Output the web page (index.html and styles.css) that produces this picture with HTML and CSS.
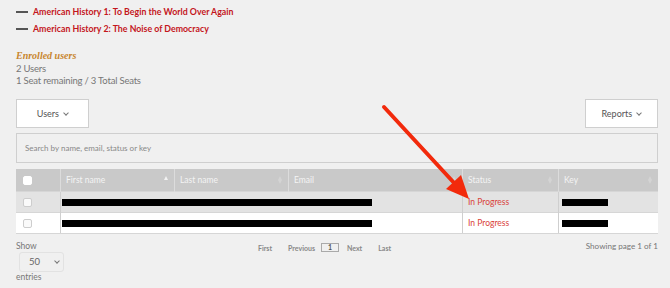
FILE: index.html
```html
<!DOCTYPE html>
<html lang="en">
<head>
  <meta charset="UTF-8">
  <title>Enrolled users</title>
  <link rel="stylesheet" href="styles.css">
</head>
<body>
  <div class="page">
    <!-- Courses in this bundle -->
    <ul class="courses">
      <li><span class="dash"></span><a href="#">American History 1: To Begin the World Over Again</a></li>
      <li><span class="dash"></span><a href="#">American History 2: The Noise of Democracy</a></li>
    </ul>

    <div class="summary">
      <h3>Enrolled users</h3>
      <p>2 Users</p>
      <p>1 Seat remaining / 3 Total Seats</p>
    </div>

    <div class="toolbar">
      <button class="drop">Users <span class="caret"></span></button>
      <button class="drop">Reports <span class="caret"></span></button>
    </div>

    <input class="search" type="text" placeholder="Search by name, email, status or key">

    <table class="users">
      <thead>
        <tr>
          <th class="col-check"><span class="box head-box"></span></th>
          <th class="col-first">First name <span class="sort up"></span></th>
          <th class="col-last">Last name <span class="sort"></span></th>
          <th class="col-email">Email <span class="sort"></span></th>
          <th class="col-status">Status <span class="sort"></span></th>
          <th class="col-key">Key <span class="sort"></span></th>
        </tr>
      </thead>
      <tbody>
        <tr class="odd">
          <td><span class="box"></span></td>
          <td class="redact-cell" colspan="3"><span class="redact"></span></td>
          <td class="status">In Progress</td>
          <td><span class="redact key"></span></td>
        </tr>
        <tr>
          <td><span class="box"></span></td>
          <td class="redact-cell" colspan="3"><span class="redact"></span></td>
          <td class="status">In Progress</td>
          <td><span class="redact key"></span></td>
        </tr>
      </tbody>
    </table>

    <div class="footer">
      <div class="length">
        <span>Show</span>
        <div class="select">50 <span class="caret"></span></div>
        <span>entries</span>
      </div>
      <div class="pager">
        <a href="#">First</a>
        <a href="#">Previous</a>
        <span class="current">1</span>
        <a href="#">Next</a>
        <a href="#">Last</a>
      </div>
      <div class="info">Showing page 1 of 1</div>
    </div>
  </div>

  <!-- annotation arrow drawn over the page -->
  <svg class="arrow" width="670" height="288" viewBox="0 0 670 288">
    <line x1="384" y1="107" x2="456" y2="185" stroke="#f22a0c" stroke-width="4" stroke-linecap="round"/>
    <polygon points="469,199 446,189 461,175" fill="#f22a0c"/>
  </svg>
</body>
</html>
```

FILE: styles.css
```css
body {
  margin: 0;
  background-color: #f0f0f0;
  font-family: Lato, "Open Sans", Arial, sans-serif;
  color: #666;
  position: relative;
}
.page {
  padding: 3px 12px 0 16px;
}
.courses {
  list-style: none;
  margin: 0;
  padding: 0;
}
.courses li {
  display: flex;
  align-items: center;
  height: 17px;
}
.dash {
  display: inline-block;
  width: 12px;
  height: 2px;
  background: #555;
  margin-right: 5px;
}
.courses a {
  color: #c4161c;
  font-weight: bold;
  font-size: 8.8px;
  text-decoration: none;
}
.summary {
  margin-top: 12px;
}
.summary h3 {
  margin: 0;
  font-family: "Liberation Serif", serif;
  font-style: italic;
  font-weight: bold;
  font-size: 10px;
  color: #c8862e;
  line-height: 14px;
}
.summary p {
  margin: 0;
  font-size: 9.5px;
  letter-spacing: -0.2px;
  line-height: 12px;
  color: #777;
}
.toolbar {
  display: flex;
  justify-content: space-between;
  margin-top: 12px;
}
.drop {
  width: 73px;
  height: 29px;
  background: #fff;
  border: 1px solid #cfcfcf;
  font-family: inherit;
  font-size: 9px;
  color: #555;
  padding: 0;
}
.caret {
  display: inline-block;
  width: 3px;
  height: 3px;
  border-right: 1px solid #777;
  border-bottom: 1px solid #777;
  transform: rotate(45deg);
  margin: 0 0 2px 3px;
}
.search {
  display: block;
  box-sizing: border-box;
  width: 100%;
  height: 30px;
  margin-top: 5px;
  border: 1px solid #cfcfcf;
  background: #f0f0f0;
  padding: 0 8px;
  font-family: inherit;
  font-size: 8px;
}
.search::placeholder {
  color: #888;
}
.users {
  width: 100%;
  table-layout: fixed;
  border-collapse: collapse;
  margin-top: 6px;
  font-size: 8.5px;
}
.users th {
  background: #c9c9c9;
  color: #f4f4f4;
  font-weight: normal;
  text-align: left;
  height: 22px;
  padding: 0 5px;
  border-left: 1px solid #dcdcdc;
  position: relative;
}
.users th:first-child {
  border-left: none;
}
.users td {
  height: 20px;
  padding: 0 5px;
  border-left: 1px solid #cfcfcf;
  border-top: 1px solid #d6d6d6;
  background: #fff;
  white-space: nowrap;
}
.users td:first-child {
  border-left: none;
}
.users tr.odd td {
  background: #e3e3e3;
}
.users tbody tr:last-child td {
  border-bottom: 1px solid #d6d6d6;
}
.col-check { width: 34px; }
.col-first { width: 103px; }
.col-last { width: 103px; }
.col-email { width: 163px; }
.col-status { width: 85px; }
.box {
  display: block;
  width: 7px;
  height: 7px;
  margin-left: 2px;
  border: 1px solid #cdcdcd;
  border-radius: 2px;
  background: #fafafa;
}
.head-box {
  background: #fff;
  border-color: #fff;
}
.sort {
  position: absolute;
  right: 6px;
  top: 7px;
  width: 0;
  height: 0;
  border-left: 2.5px solid transparent;
  border-right: 2.5px solid transparent;
  border-bottom: 4px solid #d4d4d4;
}
.sort::after {
  content: "";
  position: absolute;
  left: -2.5px;
  top: 4px;
  border-left: 2.5px solid transparent;
  border-right: 2.5px solid transparent;
  border-top: 4px solid #d4d4d4;
}
.sort.up {
  border-bottom-color: #f2f2f2;
}
.sort.up::after {
  border-top-color: transparent;
}
.redact-cell {
  padding-left: 1px !important;
}
.redact {
  display: block;
  width: 310px;
  height: 7px;
  background: #000;
}
.redact.key {
  width: 46px;
  margin-left: -2px;
}
.status {
  color: #d9423a;
}
.footer {
  display: flex;
  align-items: flex-start;
  margin-top: 7px;
  font-size: 8.5px;
}
.length {
  width: 230px;
  display: flex;
  flex-direction: column;
  align-items: flex-start;
  color: #777;
  line-height: 10px;
}
.select {
  box-sizing: border-box;
  width: 45px;
  height: 20px;
  margin: 1px 0 0 3px;
  border: 1px solid #e2e2e2;
  border-radius: 3px;
  display: flex;
  align-items: center;
  justify-content: space-between;
  padding: 0 4px 0 9px;
  font-size: 9.5px;
  color: #666;
}
.pager {
  display: flex;
  align-items: center;
  margin-left: 12px;
  margin-top: 2px;
  font-size: 7px;
  font-weight: bold;
}
.pager a {
  color: #888;
  text-decoration: none;
  margin-right: 16px;
}
.current {
  box-sizing: border-box;
  width: 18px;
  height: 9px;
  border: 1px solid #aaa;
  text-align: center;
  line-height: 7px;
  color: #555;
  margin: 0 8px 0 -10px;
}
.info {
  margin-left: auto;
  font-size: 8.1px;
  color: #777;
}
.arrow {
  position: absolute;
  top: 0;
  left: 0;
  pointer-events: none;
}
```
